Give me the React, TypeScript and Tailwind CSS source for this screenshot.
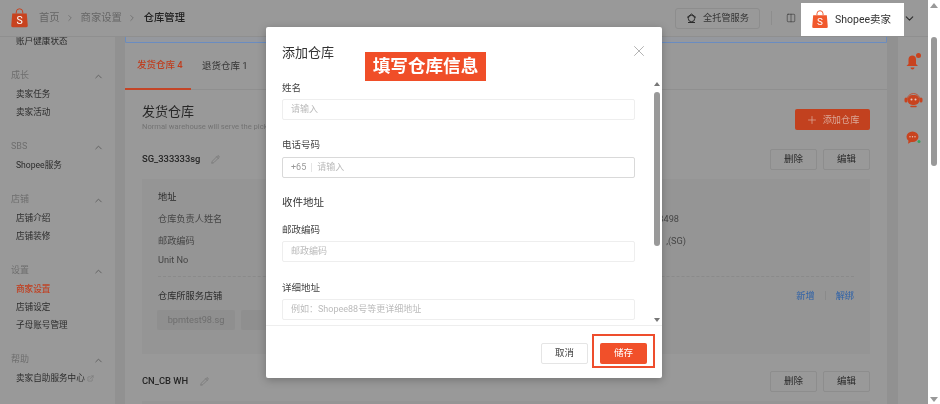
import { ChevronDown, ChevronRight, ChevronUp, Columns2, ExternalLink, Pencil, Plus, X } from 'lucide-react';

const FONT = 'font-[Roboto,"Noto_Sans_CJK_SC",sans-serif]';

const NAV = [
  { title: '成长', items: ['卖家任务', '卖家活动'] },
  { title: 'SBS', items: ['Shopee服务'] },
  { title: '店铺', items: ['店铺介绍', '店铺装修'] },
  { title: '设置', items: ['商家设置', '店铺设定', '子母账号管理'] },
  { title: '帮助', items: ['卖家自助服务中心'] },
];

function ShopeeLogo({ size, color }: { size: number; color: string }) {
  return (
    <svg width={size} height={size * 1.15} viewBox="0 0 34 39" fill="none">
      <path d="M10.500 11V8a6.500 6.500 0 0 1 13 0v3" stroke={color} strokeWidth="2" />
      <path d="M2.500 11h29l2 24a3 3 0 0 1-3 3.400H3.500a3 3 0 0 1-3-3.400z" fill={color} />
      <text x="17" y="32" textAnchor="middle" fontSize="21" fill="#fff" fontFamily="Roboto, sans-serif">
        S
      </text>
    </svg>
  );
}

function OutlineBtn({ label }: { label: string }) {
  return (
    <button className="w-[47px] h-[21px] rounded-[2px] border border-[#8d8d8d] text-[9.5px] text-[#2b2b2b]">
      {label}
    </button>
  );
}

function Field({ label, placeholder, gap }: { label: string; placeholder: string; gap: string }) {
  return (
    <div className={gap}>
      <div className="h-4 leading-4 text-[9.5px] text-[#444]">{label}</div>
      <div className="mt-[3px] h-[21px] border border-[#eeeeee] rounded-[2px] px-[8px] leading-[19px] text-[9px] text-[#bbb]">
        {placeholder}
      </div>
    </div>
  );
}

function Sidebar() {
  return (
    <aside className="w-[115px] shrink-0 -mt-[5px]">
      <div className="h-[18px] leading-[18px] pl-[16px] text-[8.6px] text-[#2b2b2b]">账户健康状态</div>
      {NAV.map((s) => (
        <div key={s.title} className="mt-[17px]">
          <div className="h-[18px] flex items-center justify-between pl-[11px] pr-[11px] text-[9px] text-[#6e6e6e]">
            {s.title}
            <ChevronUp size={11} className="text-[#5e5e5e]" />
          </div>
          {s.items.map((i) => (
            <div
              key={i}
              className={`h-[18px] leading-[18px] pl-[16px] text-[8.6px] flex items-center gap-[2px] ${
                i === '商家设置' ? 'text-[#c23c1c] font-medium' : 'text-[#2b2b2b]'
              }`}
            >
              {i}
              {i === '卖家自助服务中心' && <ExternalLink size={7} className="text-[#777]" />}
            </div>
          ))}
        </div>
      ))}
    </aside>
  );
}

function WarehouseHead({ name, pencil }: { name: string; pencil: string }) {
  return (
    <div className="flex items-center justify-between h-[21px]">
      <div className="flex items-center text-[9.4px] font-medium text-[#262626]">
        {name}
        <Pencil size={9} strokeWidth={1.4} className={`${pencil} text-[#666]`} />
      </div>
      <div className="flex gap-[6px]">
        <OutlineBtn label="删除" />
        <OutlineBtn label="编辑" />
      </div>
    </div>
  );
}

function MainCard() {
  return (
    <div className="flex-1 min-w-0">
      <div className="h-[6px] bg-[#95989e] border-x border-b border-[#6a8cc0] rounded-b-[2px]" />
      <div className="bg-[#999999] h-full">
        <div className="h-[47px] flex border-b border-[#8f8f8f]">
          <div className="w-[66px] pl-[12px] h-[47px] border-b-2 border-[#c44527] flex items-center text-[9.5px] font-medium text-[#bf3d1e] whitespace-nowrap">
            发货仓库 4
          </div>
          <div className="ml-[11px] flex items-center text-[9.5px] text-[#333]">退货仓库 1</div>
        </div>
        <div className="px-[17px] pt-[12px]">
          <div className="flex justify-between">
            <div>
              <div className="h-[19px] leading-[19px] text-[13px] text-[#262626]">发货仓库</div>
              <div className="h-[12px] leading-[12px] text-[7.6px] text-[#737373]">Normal warehouse will serve the pickup</div>
            </div>
            <button className="mt-[7px] w-[75px] h-[21px] bg-[#c2411f] rounded-[2px] flex items-center justify-center gap-[5px] text-[9.2px] text-[#dba898]">
              <Plus size={12} strokeWidth={1.5} />
              添加仓库
            </button>
          </div>
          <div className="mt-[16px]">
            <WarehouseHead name="SG_333333sg" pencil="ml-[11px]" />
          </div>
          <div className="mt-[9px] h-[175px] bg-[#959595] px-[16px] pt-[9px] text-[9.2px] text-[#454545]">
            <div className="h-[18px] leading-[18px] text-[#2b2b2b]">地址</div>
            <div className="mt-[4px] h-[18px] leading-[18px] flex justify-between w-[521px]">
              <span>仓库负责人姓名</span>
              <span>8498</span>
            </div>
            <div className="mt-[4px] h-[18px] leading-[18px] flex justify-between w-[528px]">
              <span>邮政编码</span>
              <span>,(SG)</span>
            </div>
            <div className="mt-[1px] h-[18px] leading-[18px]">Unit No</div>
            <div className="mt-[7px] border-t border-dashed border-[#8a8a8a]" />
            <div className="mt-[10px] flex items-center justify-between h-[18px]">
              <span className="text-[#2b2b2b]">仓库所服务店铺</span>
              <div className="flex items-center text-[#2f62a8]">
                新增
                <span className="mx-[10px] w-px h-[9px] bg-[#8a8a8a]" />
                解绑
              </div>
            </div>
            <div className="mt-[5px] -ml-px flex gap-[6px]">
              <span className="h-[20px] w-[78px] flex items-center justify-center rounded-[2px] bg-[#8f8f8f] text-[#6e6e6e]">
                bpmtest98.sg
              </span>
              <span className="h-[20px] w-[78px] flex items-center justify-center rounded-[2px] bg-[#8f8f8f] text-[#6e6e6e]">
                seller
              </span>
            </div>
          </div>
          <div className="mt-[17px]">
            <WarehouseHead name="CN_CB WH" pencil="ml-[12px]" />
          </div>
          <div className="mt-[9px] h-[40px] bg-[#959595]" />
        </div>
      </div>
    </div>
  );
}

function Rail() {
  return (
    <div className="w-[30px] shrink-0 flex flex-col items-center pt-[16px] gap-[20px]">
      <svg width="17" height="18" viewBox="0 0 17 18" fill="#c8431f">
        <path d="M7 2.500a4 4 0 0 1 4 4v4.500l2 2H1.500l2-2V6.500a4 4 0 0 1 3.500-4z" />
        <path d="M5.500 14.500h4a2 2 0 0 1-4 0z" />
        <circle cx="13.500" cy="2.500" r="2.500" />
      </svg>
      <svg width="19" height="18" viewBox="0 0 19 18" fill="none">
        <path d="M3 9a6.500 6.500 0 0 1 13 0" stroke="#c8431f" strokeWidth="0.8" />
        <rect x="0.500" y="6.500" width="3" height="5" rx="1.500" fill="#c8431f" />
        <rect x="15.500" y="6.500" width="3" height="5" rx="1.500" fill="#c8431f" />
        <rect x="3.500" y="4" width="12" height="10" rx="5" fill="#c8431f" />
        <circle cx="7.500" cy="8.500" r="1" fill="#e8c8c0" />
        <circle cx="11.500" cy="8.500" r="1" fill="#e8c8c0" />
        <path d="M7 15.500h5" stroke="#c8431f" strokeWidth="1.500" strokeLinecap="round" />
      </svg>
      <svg className="mt-[2px]" width="15" height="13" viewBox="0 0 15 13" fill="none">
        <path d="M6.500 0.500a6 5.200 0 0 1 6 5.200 6 5.200 0 0 1-6 5.200H5l-3 1.800.5-3A5.500 5 0 0 1 .5 5.700a6 5.200 0 0 1 6-5.200z" fill="#c8431f" />
        <circle cx="4" cy="5.700" r=".7" fill="#e8c8c0" />
        <circle cx="6.500" cy="5.700" r=".7" fill="#e8c8c0" />
        <circle cx="9" cy="5.700" r=".7" fill="#e8c8c0" />
        <circle cx="13" cy="10.500" r="1.500" fill="#3aa060" />
      </svg>
    </div>
  );
}

function Header() {
  return (
    <header className="h-[37px] shrink-0 border-b border-[#8f8f8f] flex items-center pl-[11px] pr-[12px] relative z-10 bg-[#999999]">
      <ShopeeLogo size={17} color="#c8431f" />
      <nav className="ml-[11px] flex items-center text-[10.3px] text-[#666]">
        首页
        <ChevronRight size={10} className="mx-[5.5px] text-[#6e6e6e]" />
        商家设置
        <ChevronRight size={10} className="mx-[5.5px] text-[#6e6e6e]" />
        <span className="ml-px text-[#222] font-medium">仓库管理</span>
      </nav>
      <button className="ml-auto w-[85px] h-[21px] border border-[#8d8d8d] rounded-[3px] flex items-center justify-center gap-[6px] text-[9.2px] text-[#333]">
        <svg width="11" height="11" viewBox="0 0 11 11" fill="none" stroke="#2b2b2b" strokeWidth="1">
          <circle cx="5.500" cy="5.500" r="3.200" />
          <path d="M1 4.500 5.500 1 10 4.500M2 9.500h7" />
        </svg>
        全托管服务
      </button>
      <span className="ml-[11px] w-px h-[14px] bg-[#8d8d8d]" />
      <Columns2 size={10} strokeWidth={1.3} className="ml-[14px] text-[#2b2b2b]" />
      <ChevronDown size={13} className="ml-[107px] text-[#2b2b2b]" />
    </header>
  );
}

export default function App() {
  return (
    <div className={`relative w-[940px] h-[404px] overflow-hidden bg-white flex blur-[0.4px] ${FONT}`}>
      <div className="w-[928px] h-full flex flex-col overflow-hidden bg-[#999999]">
        <Header />
        <div className="flex flex-1 min-h-0 overflow-hidden">
          <Sidebar />
          <div className="flex-1 min-w-0 flex bg-[#919191] pl-[10px] pr-[11px]">
            <MainCard />
          </div>
          <Rail />
        </div>
      </div>

      {/* page scrollbar */}
      <div className="w-[12px] shrink-0 flex flex-col items-center bg-white">
        <span className="mt-[3px] border-x-[4px] border-b-[5px] border-x-transparent border-b-[#999]" />
        <span className="mt-[29px] w-[6px] h-[129px] rounded-[3px] bg-[#999]" />
        <span className="mt-auto mb-[2px] border-x-[4px] border-t-[5px] border-x-transparent border-t-[#999]" />
      </div>

      {/* seller label pasted over the header */}
      <div className="absolute z-30 left-[801px] top-[3px] w-[103px] h-[33px] bg-white flex items-center pl-[11px] gap-[7px] text-[10.5px] text-[#333]">
        <ShopeeLogo size={16} color="#f1582c" />
        Shopee卖家
      </div>

      {/* modal */}
      <div className="absolute z-30 left-[266px] top-[27px] w-[396px] h-[351px] bg-white rounded-[2px] shadow-[0_2px_8px_rgba(0,0,0,0.25)] flex flex-col">
        <div className="h-[53px] shrink-0 flex justify-between pl-[16px] pr-[14.5px] pt-[17px] text-[13px] leading-[18px] text-[#333]">
          添加仓库
          <X size={18} strokeWidth={1.2} className="-mt-[2.5px] text-[#aaa]" />
        </div>
        <div className="flex-1 min-h-0 flex">
          <div className="flex-1 min-w-0 overflow-hidden pl-[16px] pr-[17px]">
            <Field label="姓名" placeholder="请输入" gap="" />
            <div className="mt-[17px]">
              <div className="h-4 leading-4 text-[9.5px] text-[#444]">电话号码</div>
              <div className="mt-[4px] h-[21px] border border-[#d9d9d9] rounded-[2px] px-[8px] flex items-center text-[9px] text-[#bbb]">
                <span className="text-[#999]">+65</span>
                <span className="mx-[5px] w-px h-[9px] bg-[#e5e5e5]" />
                请输入
              </div>
            </div>
            <div className="mt-[17px] h-4 leading-4 text-[10.5px] text-[#333]">收件地址</div>
            <Field label="邮政编码" placeholder="邮政编码" gap="mt-[11px]" />
            <Field label="详细地址" placeholder="例如：Shopee88号等更详细地址" gap="mt-[18px]" />
          </div>
          <div className="w-[9px] mr-[1px] shrink-0 flex flex-col items-center">
            <span className="mt-[2px] border-x-[3px] border-b-[4px] border-x-transparent border-b-[#777]" />
            <span className="mt-[6px] w-[6px] h-[154px] rounded-[3px] bg-[#999]" />
            <span className="mt-auto mb-[3px] border-x-[3px] border-t-[4px] border-x-transparent border-t-[#777]" />
          </div>
        </div>
        <div className="h-[53px] shrink-0 border-t border-[#eee] flex justify-end items-center gap-[12px] pr-[15px] pt-[2px]">
          <button className="w-[47px] h-[21px] border border-[#e5e5e5] rounded-[2px] text-[9.5px] text-[#444]">取消</button>
          <button className="w-[47px] h-[21px] rounded-[2px] bg-[#f1502a] text-[9.5px] text-white">储存</button>
        </div>
        <div className="absolute left-[99px] top-[25px] w-[121px] h-[29px] bg-[#f04e28] flex items-center justify-center text-[17.6px] font-bold text-white">
          填写仓库信息
        </div>
        <div className="absolute left-[326px] top-[307px] w-[63px] h-[34px] border-2 border-[#ee4d2d]" />
      </div>
    </div>
  );
}
